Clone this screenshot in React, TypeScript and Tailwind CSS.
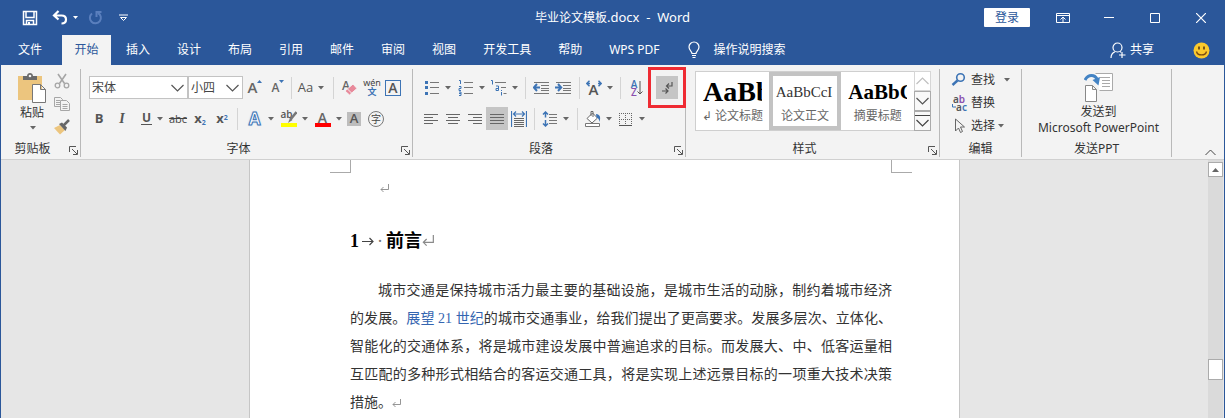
import React from "react";

type Kids = { children?: React.ReactNode };

function Svg({ w = 16, h = 16, children }: Kids & { w?: number; h?: number }) {
  return (
    <svg width={w} height={h} viewBox={`0 0 ${w} ${h}`} fill="none" className="shrink-0" aria-hidden="true">
      {children}
    </svg>
  );
}

function Caret() {
  return (
    <Svg w={7} h={4}>
      <path d="M1 0h6L4 3.5z" fill="#666" />
    </Svg>
  );
}

function Tool({ label, className = "w-[22px]", caret, children }: Kids & { label: string; className?: string; caret?: boolean }) {
  return (
    <button type="button" aria-label={label} className={`flex h-[23px] shrink-0 items-center justify-center gap-1 ${className}`}>
      {children}
      {caret && <Caret />}
    </button>
  );
}

function Sep({ className = "w-2" }: { className?: string }) {
  return (
    <span className={`flex h-[22px] shrink-0 justify-center ${className}`}>
      <span className="w-px bg-[#d4d4d4]" />
    </span>
  );
}

function Group({ title, launcher, className, children }: Kids & { title: string; launcher?: boolean; className: string }) {
  return (
    <section aria-label={title} className={`relative mt-1 flex h-[88px] shrink-0 flex-col border-r border-[#b9b9b9] ${className}`}>
      {children}
      <div className={`mt-auto flex h-4 items-center justify-center leading-4 ${launcher ? "pr-4" : ""}`}>{title}</div>
      {launcher && (
        <button type="button" aria-label={`${title}设置`} className="absolute right-0.5 bottom-0.5">
          <Svg w={9} h={9}>
            <path d="M.5 6V.5H7M3 3l5 5M8.500 4v4.500H4" stroke="#555" />
          </Svg>
        </button>
      )}
    </section>
  );
}

function Combo({ label, value, className }: { label: string; value: string; className: string }) {
  return (
    <span className={`relative flex h-[23px] items-center ${className}`}>
      <select aria-label={label} defaultValue={value} className="h-full w-full appearance-none border border-[#c3c3c3] bg-white pl-0.5 text-xs text-[#444] outline-none">
        <option>{value}</option>
      </select>
      <span className="pointer-events-none absolute right-1">
        <Svg w={13} h={8}>
          <path d="M.5 1l6 6 6-6" stroke="#555" strokeWidth="1.200" />
        </Svg>
      </span>
    </span>
  );
}

const tabs = ["插入", "设计", "布局", "引用", "邮件", "审阅", "视图", "开发工具", "帮助", "WPS PDF"];

function TitleBar() {
  return (
    <header className="grid h-[35px] grid-cols-[1fr_auto_1fr] items-center text-white">
      <div className="flex items-center pl-[21px]">
        <button type="button" aria-label="保存">
          <Svg>
            <path d="M1.500 1.500h13v13h-13zM4 1.500v6h8v-6M4.500 14.500v-4h7v4" stroke="#fff" strokeWidth="1.500" />
            <path d="M6 12h2v2.500H6z" fill="#fff" />
          </Svg>
        </button>
        <button type="button" aria-label="撤消" className="ml-3.5 flex items-center gap-1">
          <Svg>
            <path d="M6.500 1L2 5.500l4.500 4M2.500 5.500h7c3 0 4.500 1.600 4.500 4s-1.500 4-4.500 4" stroke="#fff" strokeWidth="2.200" />
          </Svg>
          <Svg w={7} h={4}>
            <path d="M1 0h5L3.500 3z" fill="#fff" />
          </Svg>
        </button>
        <button type="button" aria-label="重复" className="ml-2">
          <Svg>
            <path d="M5 3.500a5.500 5.500 0 1 0 6-.5M9.500 7V2h5" stroke="#5a7fbd" strokeWidth="2" />
          </Svg>
        </button>
        <button type="button" aria-label="自定义快速访问工具栏" className="ml-4">
          <Svg w={9} h={8}>
            <path d="M0 1h9M1.500 3.500l3 3 3-3z" stroke="#fff" />
          </Svg>
        </button>
      </div>
      <h1 className="text-xs whitespace-pre">毕业论文模板<span className="text-[13px]">.docx  -  Word</span></h1>
      <div className="flex items-center justify-end">
        <button type="button" className="mr-2.5 h-[19px] w-[46px] rounded-[1px] bg-white text-xs leading-[19px] text-[#2b579a]">登录</button>
        <button type="button" aria-label="功能区显示选项" className="flex w-[46px] justify-center">
          <Svg w={14} h={12}>
            <path d="M.5 1.500h13v9H.5zM.5 3.500h13M7 10V5M4.500 7.500L7 5l2.500 2.500" stroke="#fff" />
          </Svg>
        </button>
        <button type="button" aria-label="最小化" className="flex w-[46px] justify-center">
          <Svg w={10} h={10}><path d="M0 4.500h10" stroke="#fff" /></Svg>
        </button>
        <button type="button" aria-label="最大化" className="flex w-[46px] justify-center">
          <Svg w={10} h={10}><path d="M.5.5h9v9h-9z" stroke="#fff" /></Svg>
        </button>
        <button type="button" aria-label="关闭" className="flex w-[46px] justify-center">
          <Svg w={10} h={10}><path d="M0 0l10 10M10 0L0 10" stroke="#fff" strokeWidth="1.200" /></Svg>
        </button>
      </div>
    </header>
  );
}

function Tabs() {
  return (
    <nav className="flex h-[30px] items-stretch gap-[3px] pl-1.5 text-xs text-white">
      <button type="button" className="mr-1 px-[11px]">文件</button>
      <button type="button" className="ml-0.5 w-[49px] bg-[#f3f3f3] text-[#2b579a]">开始</button>
      {tabs.map((t) => (
        <button type="button" key={t} className="px-3 whitespace-nowrap">{t}</button>
      ))}
      <button type="button" className="ml-[13px] flex items-center gap-3.5">
        <Svg w={12} h={18}>
          <path d="M4 12.500c0-2-3-3.200-3-6.500a5 5 0 0 1 10 0c0 3.300-3 4.500-3 6.500zM4 14.500h4M4.500 16.500h3" stroke="#fff" strokeWidth="1.200" />
        </Svg>
        操作说明搜索
      </button>
      <button type="button" className="ml-auto flex items-center gap-1">
        <Svg w={16} h={17}>
          <circle cx="7.500" cy="5.500" r="4.500" stroke="#fff" strokeWidth="1.200" />
          <path d="M1 16c0-3 1.500-5.300 4-6.300M10 9.500l1 .8M12 10v6M9 13h6.500" stroke="#fff" strokeWidth="1.200" />
        </Svg>
        共享
      </button>
      <button type="button" aria-label="反馈" className="mr-3.5 ml-9">
        <Svg w={17} h={17}>
          <circle cx="8.500" cy="8.500" r="8" fill="#fbc92c" />
          <path d="M6 4.500v3M11 4.500v3" stroke="#6b4a16" strokeWidth="1.800" />
          <path d="M3.500 9.500c1 4.500 9 4.500 10 0" stroke="#7a4b12" strokeWidth="1.300" />
        </Svg>
      </button>
    </nav>
  );
}

function Clipboard() {
  return (
    <Group title="剪贴板" launcher className="w-[80px]">
      <div className="flex gap-2 pt-1 pl-[17px]">
        <button type="button" className="flex w-7 flex-col items-center leading-[18px]">
          <Svg w={28} h={30}>
            <path d="M0 3h24v24H0z" fill="#ecc57e" />
            <path d="M5 7V3h4c0-4 6-4 6 0h4v4z" fill="#6a6a6a" />
            <circle cx="12" cy="3" r="1.300" fill="#f3f3f3" />
            <path d="M14.500 11.500h8l5 5v13h-13zM22.500 11.500v5h5" fill="#fff" stroke="#777" />
          </Svg>
          <span className="mt-px whitespace-nowrap">粘贴</span>
          <span className="mt-1"><Caret /></span>
        </button>
        <div className="-mt-1 flex flex-col">
          <Tool label="剪切" className="w-4">
            <Svg>
              <path d="M4 1l6.500 9.500M12 1L5.500 10.500" stroke="#a6a6a6" strokeWidth="1.600" />
              <circle cx="3.500" cy="12.500" r="2.300" stroke="#a6a6a6" strokeWidth="1.300" />
              <circle cx="12.500" cy="12.500" r="2.300" stroke="#a6a6a6" strokeWidth="1.300" />
            </Svg>
          </Tool>
          <Tool label="复制" className="w-4">
            <Svg>
              <path d="M.5 1.500h6l2 2v7h-8zM2 4.500h4M2 6.500h4M2 8.500h4" stroke="#a6a6a6" />
              <path d="M6.500 4.500h6l3 3v7h-9z" fill="#f3f3f3" stroke="#a6a6a6" />
              <path d="M8.500 8.500h5M8.500 10.500h5M8.500 12.500h5" stroke="#a6a6a6" />
            </Svg>
          </Tool>
          <Tool label="格式刷" className="w-4">
            <Svg>
              <path d="M0 9l6-3 5 5-5 4.500z" fill="#ecc57e" />
              <path d="M5 5l3-1.500 5 5L11.500 12z" fill="#666" />
              <path d="M9.500 6.500L15 1" stroke="#666" strokeWidth="2.500" />
            </Svg>
          </Tool>
        </div>
      </div>
    </Group>
  );
}

const glyph = "font-['Open_Sans','Noto_Sans_CJK_SC',sans-serif] leading-none";

function FontGroup() {
  return (
    <Group title="字体" launcher className="w-[332px]">
      <div className="flex items-center pt-[7px] pl-2">
        <Combo label="字体" value="宋体" className="w-[99px]" />
        <Combo label="字号" value="小四" className="w-[55px]" />
        <Tool label="增大字号" className="w-6">
          <span className={`${glyph} text-[15px] font-semibold text-[#666]`}>A</span>
          <span className="-ml-1 self-start"><Svg w={5} h={9}><path d="M0 7h5L2.500 4z" fill="#3d74b5" /></Svg></span>
        </Tool>
        <Tool label="减小字号">
          <span className={`${glyph} text-[12px] font-semibold text-[#666]`}>A</span>
          <span className="-ml-1 self-start"><Svg w={5} h={9}><path d="M0 4h5L2.500 7z" fill="#3d74b5" /></Svg></span>
        </Tool>
        <Sep className="w-1" />
        <Tool label="更改大小写" className="w-9" caret><span className={`${glyph} text-[13px] text-[#555]`}>Aa</span></Tool>
        <Sep />
        <Tool label="清除所有格式" className="w-[26px]">
          <span className="relative h-4 w-4">
            <span className={`${glyph} absolute top-0 left-0 text-[12px] font-semibold text-[#666]`}>A</span>
            <span className="absolute top-0 left-0">
              <Svg>
                <path d="M3 11L11 4l4 4.500L7.500 15z" fill="#e8899a" stroke="#f3f3f3" />
                <path d="M5.500 9l4.500 4.500" stroke="#f3f3f3" />
              </Svg>
            </span>
          </span>
        </Tool>
        <Tool label="拼音指南" className="w-[18px]">
          <span className="flex flex-col items-center leading-none">
            <span className="text-[9px] leading-[8px] text-[#444]">wén</span>
            <span className="text-[9px] leading-[9px] font-bold text-[#3d74b5]">文</span>
          </span>
        </Tool>
        <Tool label="字符边框" className="w-6">
          <span className={`${glyph} flex size-4 items-center justify-center border border-[#3d74b5] text-[14px] font-semibold text-[#555]`}>A</span>
        </Tool>
      </div>
      <div className="flex items-center pt-2 pl-2">
        <Tool label="加粗" className="w-5"><span className={`${glyph} text-[13px] font-bold text-[#555]`}>B</span></Tool>
        <Tool label="倾斜" className="w-[26px]"><span className="font-['Liberation_Serif',serif] text-sm leading-none font-bold text-[#555] italic">I</span></Tool>
        <Tool label="下划线" className="w-[34px]" caret><span className={`${glyph} border-b border-[#555] px-px text-[12px] font-bold text-[#555]`}>U</span></Tool>
        <Tool label="删除线" className="w-[18px]"><span className={`${glyph} text-[11px] text-[#444] line-through`}>abc</span></Tool>
        <Tool label="下标" className="w-[26px]">
          <span className={`${glyph} text-[13px] font-bold text-[#555]`}>x<sub className="text-[7px] text-[#3d74b5]">2</sub></span>
        </Tool>
        <Tool label="上标" className="w-[18px]">
          <span className={`${glyph} text-[13px] font-bold text-[#555]`}>x<sup className="text-[7px] text-[#3d74b5]">2</sup></span>
        </Tool>
        <Sep className="w-3" />
        <Tool label="文本效果" className="w-[34px]" caret>
          <span className={`${glyph} w-4 text-center text-[17px] font-bold text-white [-webkit-text-stroke:1px_#3d74b5] [text-shadow:0_0_2px_#7fb0e6]`}>A</span>
        </Tool>
        <Tool label="突出显示" className="w-[34px]" caret>
          <span className="flex flex-col">
            <span className="relative h-3 w-4">
              <span className={`${glyph} absolute -top-0.5 left-0 text-[10px] font-semibold text-[#555]`}>ab</span>
              <span className="absolute top-0 right-0">
                <Svg w={10} h={12}><path d="M9.500 1L3.500 8.500" stroke="#777" strokeWidth="2.500" /><path d="M3 7l2.500 2L1 12z" fill="#777" /></Svg>
              </span>
            </span>
            <span className="h-1 w-4 bg-[#ffff00]" />
          </span>
        </Tool>
        <Tool label="字体颜色" className="w-[34px]" caret>
          <span className="flex flex-col items-center">
            <span className={`${glyph} h-3 text-[14px] font-semibold text-[#666]`}>A</span>
            <span className="h-1 w-4 bg-[#ff0000]" />
          </span>
        </Tool>
        <Tool label="字符底纹" className="w-[18px]">
          <span className={`${glyph} flex size-3.5 items-center justify-center bg-[#bdbdbd] text-[13px] font-semibold text-[#555]`}>A</span>
        </Tool>
        <Tool label="带圈字符" className="w-[26px]">
          <span className="flex size-4 items-center justify-center rounded-full border border-[#777] text-[10px] leading-none text-[#444]">字</span>
        </Tool>
      </div>
    </Group>
  );
}

function Lines({ d }: { d: string }) {
  return <Svg w={14} h={12}><path d={d} stroke="#666" /></Svg>;
}

function ParagraphGroup() {
  return (
    <Group title="段落" launcher className="w-[273px]">
      <div className="flex items-center pt-[7px] pl-[7px]">
        <Tool label="项目符号" className="w-[34px]" caret>
          <Svg>
            <path d="M1 1h3v3H1zM1 6h3v3H1zM1 12h3v3H1z" fill="#3d74b5" />
            <path d="M6 2.500h9M6 7.500h9M6 13.500h9" stroke="#777" />
          </Svg>
        </Tool>
        <Tool label="编号" className="w-[34px]" caret>
          <Svg>
            <path d="M1 .5h1.500V4M1 6.500h2v2H1v2h2M1 12h2v3.500H1M1 13.500h2" stroke="#3d74b5" />
            <path d="M6 2.500h9M6 7.500h9M6 13.500h9" stroke="#777" />
          </Svg>
        </Tool>
        <Tool label="多级列表" className="w-8" caret>
          <Svg>
            <path d="M0 .5h1.500v4M5 6h2.500v4.500H5v-2h2.500M10.500 12v3.500M10.500 10v1" stroke="#3d74b5" />
            <path d="M4 2.500h11M10 7.500h5M12.500 13.500h3" stroke="#777" />
          </Svg>
        </Tool>
        <Sep className="w-2.5" />
        <Tool label="减少缩进">
          <Svg>
            <path d="M1 2.500h15M8 5.500h8M8 8.500h8M8 10.500h8M1 13.500h15" stroke="#777" />
            <path d="M7 7.500H1M4 4L.8 7.500 4 11" stroke="#3d74b5" strokeWidth="2" />
          </Svg>
        </Tool>
        <Tool label="增加缩进">
          <Svg>
            <path d="M1 2.500h15M8 5.500h8M8 8.500h8M8 10.500h8M1 13.500h15" stroke="#777" />
            <path d="M0 7.500h6M3 4l3.200 3.500L3 11" stroke="#3d74b5" strokeWidth="2" />
          </Svg>
        </Tool>
        <Sep className="w-2.5" />
        <Tool label="中文版式" className="w-[30px]" caret>
          <span className="relative flex h-4 w-4 justify-center">
            <span className={`${glyph} pt-0.5 text-[15px] font-semibold text-[#555]`}>A</span>
            <span className="absolute top-0 left-0">
              <Svg>
                <path d="M4 3.500H1M3.500.8L.7 3.500l2.800 2.700M12 3.500h3M12.500.8l2.800 2.700-2.800 2.700" stroke="#3d74b5" strokeWidth="1.500" />
              </Svg>
            </span>
          </span>
        </Tool>
        <Sep className="w-3" />
        <Tool label="排序">
          <span className={`${glyph} -mr-1 flex flex-col text-[10px] font-semibold`}>
            <span className="leading-[8px] text-[#3d74b5]">A</span>
            <span className="leading-[8px] text-[#8a4fae]">Z</span>
          </span>
          <Svg w={6} h={14}>
            <path d="M3 0v13M.5 10.500L3 13l2.500-2.500" stroke="#555" />
          </Svg>
        </Tool>
        <span className="relative ml-2 flex">
          <Tool label="显示编辑标记" className="w-[22px] bg-[#c5c5c5]">
            <Svg>
              <path d="M13 2v4H8M10 3.500L7.500 6 10 8.500M3 11h6M6.500 8.500L9 11l-2.500 2.500" stroke="#555" strokeWidth="1.200" />
            </Svg>
          </Tool>
          <span className="pointer-events-none absolute -inset-x-2 -inset-y-[9px] z-10 border-[3px] border-[#ef2b33]" />
        </span>
      </div>
      <div className="flex items-center pt-2 pl-[7px]">
        <Tool label="左对齐"><Lines d="M0 1.500h14M0 4.500h9M0 7.500h14M0 10.500h9" /></Tool>
        <Tool label="居中"><Lines d="M0 1.500h14M2 4.500h10M0 7.500h14M2 10.500h10" /></Tool>
        <Tool label="右对齐"><Lines d="M0 1.500h14M5 4.500h9M0 7.500h14M5 10.500h9" /></Tool>
        <Tool label="两端对齐" className="w-[22px] bg-[#c5c5c5]"><Lines d="M0 1.500h14M0 4.500h14M0 7.500h14M0 10.500h14" /></Tool>
        <Tool label="分散对齐">
          <Svg>
            <path d="M.5 0v16M15.500 0v16M3 3h10M5 .5L2.500 3 5 5.500M11 .5L13.500 3 11 5.500" stroke="#3d74b5" strokeWidth="1.200" />
            <path d="M3 7.500h10M3 9.500h10M3 11.500h10M3 13.500h10M3 15.500h10" stroke="#666" />
          </Svg>
        </Tool>
        <Sep />
        <Tool label="行距" className="w-[34px]" caret>
          <Svg>
            <path d="M3.500 1v5.500M1 3.500L3.500 1 6 3.500M3.500 9v6M1 12.500L3.500 15 6 12.500" stroke="#3d74b5" strokeWidth="1.500" />
            <path d="M7 3.500h8M7 6.500h8M7 9.500h8M7 12.500h8" stroke="#777" />
          </Svg>
        </Tool>
        <Sep className="w-2.5" />
        <Tool label="底纹" className="w-8" caret>
          <Svg>
            <path d="M2 7.500L7.500 2l5 5L7 12zM6 5V.5h2V6" fill="#fff" stroke="#666" />
            <path d="M11 3c4 .5 5 3 3.500 8-.5-3-1.500-4-3-4.500z" fill="#3d74b5" />
            <path d="M.5 12.500h14v3H.5z" fill="#fff" stroke="#777" />
          </Svg>
        </Tool>
        <Tool label="边框" className="w-[34px]" caret>
          <Svg>
            <path d="M1.500 2v12M7.500 2v12M13.500 2v12M1 2.500h13M1 8.500h13" stroke="#666" strokeDasharray="1 1" />
            <path d="M1 14.500h13" stroke="#555" />
          </Svg>
        </Tool>
      </div>
    </Group>
  );
}

function StyleCard({ sample, name, selected, look }: { sample: string; name: string; selected?: boolean; look: string }) {
  return (
    <button type="button" className={`flex w-[73px] flex-col items-center overflow-hidden border-4 ${selected ? "border-[#c3c3c3]" : "border-transparent"}`}>
      <span className={`h-8 w-full px-[3px] text-left font-['Liberation_Serif',serif] leading-8 whitespace-nowrap ${look}`}>
        <span className="block overflow-hidden">{sample}</span>
      </span>
      <span className="text-xs leading-4 whitespace-nowrap text-[#666]">{name}</span>
    </button>
  );
}

function StylesGroup() {
  return (
    <Group title="样式" launcher className="w-[254px]">
      <div className="mt-0.5 ml-[9px] flex h-[60px] w-[236px] border border-[#cfcfcf] bg-white">
        <StyleCard sample="AaBb" name="↲ 论文标题" look="text-[28px] font-bold text-black" />
        <StyleCard sample="AaBbCcI" name="论文正文" selected look="text-[15px] text-[#333]" />
        <StyleCard sample="AaBbC" name="摘要标题" look="text-[21px] font-bold text-black" />
        <div className="-my-px -mr-px ml-auto flex w-[17px] flex-col text-[#444]">
          <button type="button" aria-label="上一行" className="flex flex-1 items-center justify-center border border-[#d6d6d6]">
            <Svg w={13} h={8}><path d="M.5 7l6-6 6 6" stroke="#c0c0c0" strokeWidth="1.200" /></Svg>
          </button>
          <button type="button" aria-label="下一行" className="flex flex-1 items-center justify-center border border-[#ababab] bg-[#f9f9f9]">
            <Svg w={13} h={8}><path d="M.5 1l6 6 6-6" stroke="#555" strokeWidth="1.200" /></Svg>
          </button>
          <button type="button" aria-label="其他样式" className="flex flex-1 items-center justify-center border border-[#ababab] bg-[#f9f9f9]">
            <Svg w={15} h={14}><path d="M0 1.500h15M1.500 6l6 6 6-6" stroke="#444" strokeWidth="1.200" /></Svg>
          </button>
        </div>
      </div>
    </Group>
  );
}

function EditGroup() {
  const row = "flex h-[23px] items-center gap-1 whitespace-nowrap";
  return (
    <Group title="编辑" className="w-[82px]">
      <div className="-mt-px flex flex-col pl-[11px]">
        <button type="button" className={row}>
          <Svg>
            <circle cx="9.500" cy="5.500" r="3.800" stroke="#3d74b5" strokeWidth="1.600" />
            <path d="M6.500 8.500L1.500 13" stroke="#3d74b5" strokeWidth="2.400" />
          </Svg>
          查找
          <span className="ml-1"><Caret /></span>
        </button>
        <button type="button" className={row}>
          <span className="flex w-4 flex-col text-[10px] leading-[8px] font-semibold text-[#555]">
            <span>a<span className="text-[#8a4fae]">b</span></span>
            <span className="flex items-center justify-end">
              <Svg w={4} h={5}><path d="M.5 0v3H4" stroke="#3d74b5" /></Svg>a<span className="text-[#3d74b5]">c</span>
            </span>
          </span>
          替换
        </button>
        <button type="button" className={row}>
          <Svg><path d="M4.500 1v12l3-3 2 4.500 2-1L9.500 9h4z" stroke="#666" /></Svg>
          选择
          <span className="-ml-0.5"><Caret /></span>
        </button>
      </div>
    </Group>
  );
}

function SendGroup() {
  return (
    <Group title="发送PPT" className="w-[150px]">
      <button type="button" className="flex flex-col items-center pt-1 pl-1 leading-4">
        <Svg w={30} h={30}>
          <path d="M11.500.5h17v17h-13" fill="#fff" stroke="#aaa" />
          <path d="M16 4.500h10M18 7.500h8M18 10.500h8M18 13.500h8" stroke="#aaa" />
          <path d="M1 7C4 1 11 1 13.500 7" stroke="#4383c4" strokeWidth="3" />
          <path d="M8.500 7l6 5.500L16 4z" fill="#4383c4" />
          <path d="M1.500 12.500h7l4 4v12h-11zM8.500 12.500v4h4" fill="#fff" stroke="#888" />
        </Svg>
        <span className="mt-px">发送到</span>
        <span className="whitespace-nowrap">Microsoft PowerPoint</span>
      </button>
    </Group>
  );
}

function Ribbon() {
  return (
    <div className="flex h-[95px] border-b border-[#d0d0d0] bg-[#f3f3f3] text-xs text-[#333]">
      <Clipboard />
      <FontGroup />
      <ParagraphGroup />
      <StylesGroup />
      <EditGroup />
      <SendGroup />
      <button type="button" aria-label="折叠功能区" className="mt-auto mr-2 mb-[3px] ml-auto">
        <Svg w={11} h={7}><path d="M.5 6l5-5 5 5" stroke="#444" /></Svg>
      </button>
    </div>
  );
}

function ReturnMark({ big }: { big?: boolean }) {
  return (
    <svg width={big ? 12 : 9} height={big ? 12 : 9} viewBox="0 0 9 9" fill="none" className="inline-block" aria-hidden="true">
      <path d="M8.500 0v5.500H1M3.500 3L1 5.500 3.500 8" stroke="#8a8a8a" strokeWidth="0.900" />
    </svg>
  );
}

function Page() {
  return (
    <article className="w-[711px] border-x border-[#c6c6c6] bg-white">
      <div className="flex justify-between pr-[47px] pl-[80px]">
        <span className="h-[13px] w-[21px] border-r border-b border-[#aaa]" />
        <span className="h-[13px] w-[21px] border-b border-l border-[#aaa]" />
      </div>
      <div className="pt-px pr-[67px] pl-[100px] font-['Liberation_Serif','Noto_Sans_CJK_SC',serif] text-sm leading-7 text-[#333]">
        <p className="pl-[30px]"><ReturnMark /></p>
        <h2 className="mt-[25px] flex items-center text-lg leading-7 font-bold text-black">
          1
          <Svg w={18} h={12}><path d="M3 6.500h11M10.500 3l3.500 3.500-3.500 3.500" stroke="#444" strokeWidth="1.200" /></Svg>
          <span className="w-[9px] font-normal text-[#777]">·</span>
          前言
          <ReturnMark big />
        </h2>
        <p className="mt-[22px] indent-7 text-justify">
          城市交通是保持城市活力最主要的基础设施，是城市生活的动脉，制约着城市经济的发展。<a href="#outlook" className="text-[#3465b0]">展望 21 世纪</a>的城市交通事业，给我们提出了更高要求。发展多层次、立体化、智能化的交通体系，将是城市建设发展中普遍追求的目标。而发展大、中、低客运量相互匹配的多种形式相结合的客运交通工具，将是实现上述远景目标的一项重大技术决策措施。<ReturnMark />
        </p>
      </div>
    </article>
  );
}

export default function App() {
  return (
    <div lang="zh-CN" className="flex h-screen flex-col overflow-hidden border-x border-[#2b579a] bg-[#2b579a] font-['Noto_Sans','Noto_Sans_CJK_SC',sans-serif]">
      <TitleBar />
      <Tabs />
      <Ribbon />
      <main className="flex min-h-0 flex-1 bg-[#e6e6e6]">
        <div className="flex flex-1 justify-center overflow-hidden"><Page /></div>
        <div className="mr-px flex w-[15px] flex-col bg-[#dadada] pt-0.5">
          <button type="button" aria-label="向上滚动" className="flex h-[15px] items-center justify-center border border-[#ababab] bg-white">
            <Svg w={7} h={4}><path d="M0 4h7L3.500 0z" fill="#666" /></Svg>
          </button>
          <span className="flex-[182]" />
          <span className="h-[21px] border border-[#ababab] bg-white" />
          <span className="flex-[38]" />
        </div>
      </main>
    </div>
  );
}
